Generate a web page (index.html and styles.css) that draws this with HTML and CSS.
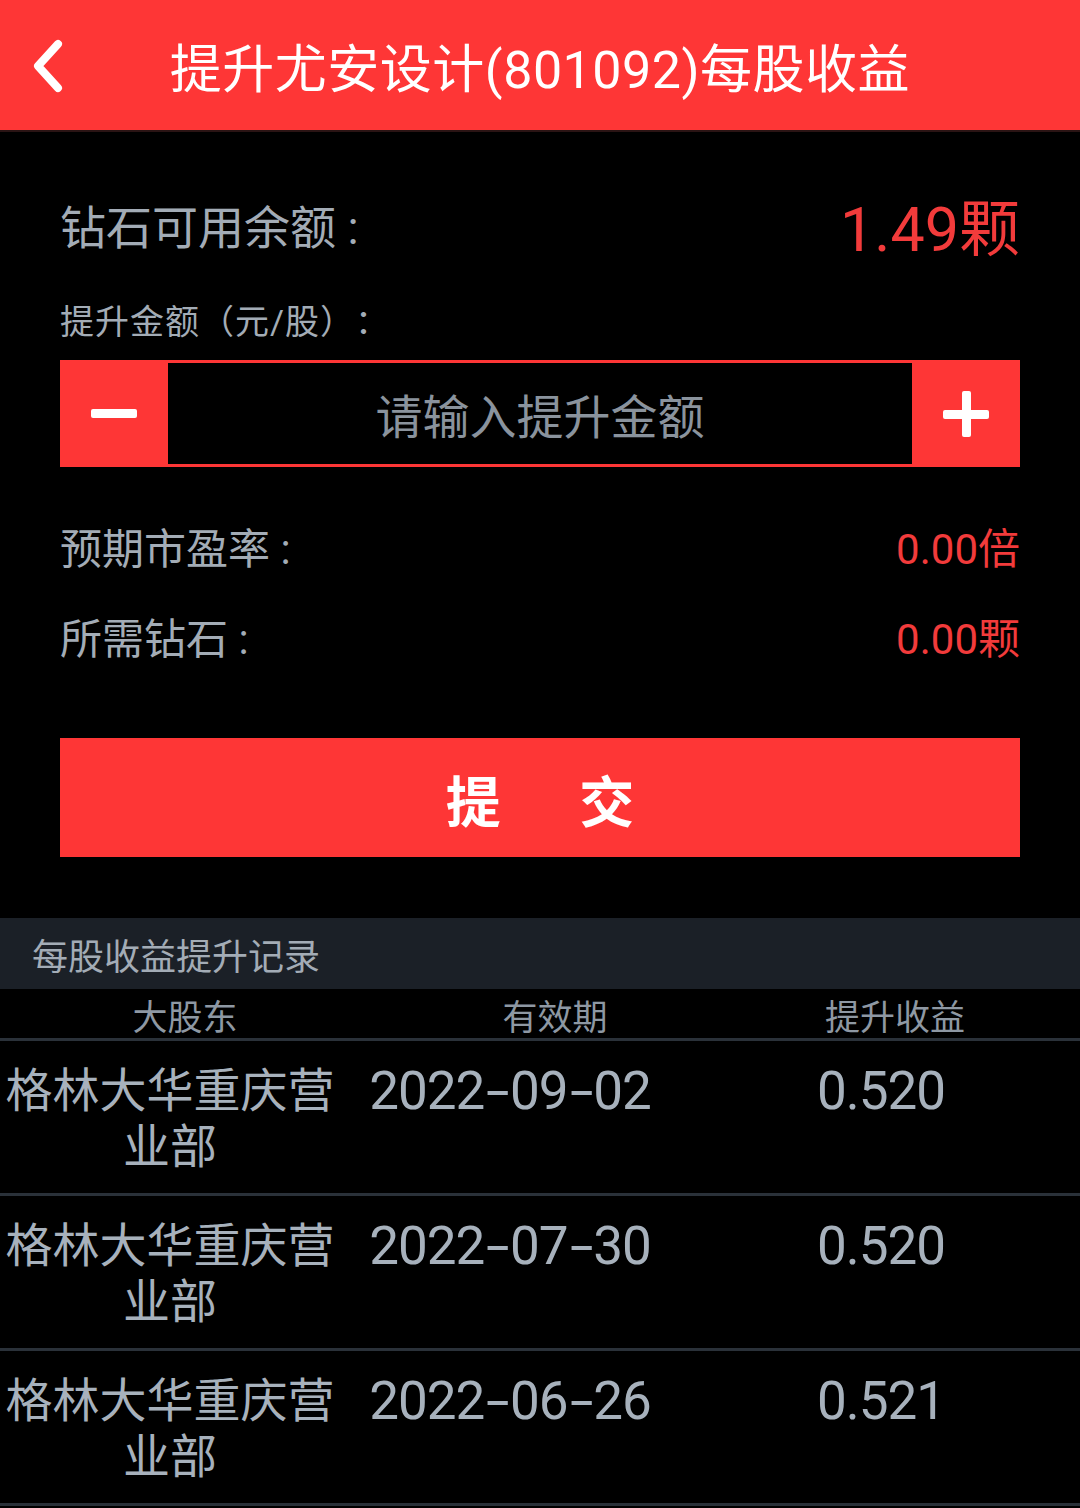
FILE: index.html
```html
<!DOCTYPE html>
<html lang="zh-CN">
<head>
    <meta charset="UTF-8">
    <meta name="viewport" content="width=device-width, initial-scale=1.0">
    <link rel="stylesheet" href="styles.css">
</head>
<body>
    <div class="topbar">
        <svg class="back" width="40" height="60" viewBox="0 0 40 60">
            <polyline points="28,8 8,30 28,52" fill="none" stroke="#fff" stroke-width="8" stroke-linecap="round" stroke-linejoin="round"/>
        </svg>
        <div class="title">提升尤安设计(801092)每股收益</div>
    </div>

    <div class="main">
        <div class="balance">
            <span class="balance-label">钻石可用余额 :</span>
            <span class="balance-value">1.49颗</span>
        </div>

        <div class="amount-label">提升金额（元/股）：</div>
        <div class="stepper">
            <div class="step-btn">
                <span class="minus"></span>
            </div>
            <div class="step-input">请输入提升金额</div>
            <div class="step-btn">
                <span class="plus"></span>
            </div>
        </div>

        <div class="info-row">
            <span class="info-label">预期市盈率 :</span>
            <span class="info-value">0.00倍</span>
        </div>
        <div class="info-row">
            <span class="info-label">所需钻石 :</span>
            <span class="info-value">0.00颗</span>
        </div>

        <div class="submit">提&nbsp;&nbsp;交</div>
    </div>

    <div class="section-title">每股收益提升记录</div>
    <div class="table-head">
        <span>大股东</span>
        <span>有效期</span>
        <span>提升收益</span>
    </div>
    <div class="record">
        <span class="holder">格林大华重庆营业部</span>
        <span class="date">2022<span class="dash">-</span>09<span class="dash">-</span>02</span>
        <span class="gain">0.520</span>
    </div>
    <div class="record">
        <span class="holder">格林大华重庆营业部</span>
        <span class="date">2022<span class="dash">-</span>07<span class="dash">-</span>30</span>
        <span class="gain">0.520</span>
    </div>
    <div class="record">
        <span class="holder">格林大华重庆营业部</span>
        <span class="date">2022<span class="dash">-</span>06<span class="dash">-</span>26</span>
        <span class="gain">0.521</span>
    </div>
</body>
</html>
```

FILE: styles.css
```css
body {
    margin: 0;
    background: #000;
    font-family: Roboto, "Noto Sans CJK SC", sans-serif;
    color: #a3acb6;
    text-spacing-trim: space-all;
}
.topbar {
    height: 130px;
    background: #fe3636;
    display: flex;
    align-items: center;
    justify-content: center;
    position: relative;
    border-bottom: 2px solid #2a1414;
}
.back {
    position: absolute;
    left: 30px;
    top: 36px;
}
.title {
    color: #fff;
    font-size: 52px;
    letter-spacing: 0.5px;
}
.main {
    padding: 0 60px;
}
.balance {
    height: 80px;
    margin-top: 52px;
    display: flex;
    align-items: center;
    justify-content: space-between;
}
.balance-label {
    font-size: 46px;
}
.balance-value {
    font-size: 61px;
    color: #f23b3b;
}
.amount-label {
    margin-top: 38px;
    font-size: 34px;
    line-height: 40px;
    letter-spacing: 1px;
}
.stepper {
    margin-top: 18px;
    height: 107px;
    display: flex;
    box-sizing: border-box;
    border-top: 3px solid #fe3636;
    border-bottom: 3px solid #fe3636;
}
.step-btn {
    width: 108px;
    background: #fe3636;
    display: flex;
    align-items: center;
    justify-content: center;
}
.minus {
    width: 46px;
    height: 9px;
    background: #fff;
    border-radius: 2px;
}
.plus {
    width: 46px;
    height: 46px;
    position: relative;
}
.plus::before,
.plus::after {
    content: "";
    position: absolute;
    background: #fff;
    border-radius: 2px;
}
.plus::before {
    left: 0;
    top: 19px;
    width: 46px;
    height: 9px;
}
.plus::after {
    left: 19px;
    top: 0;
    width: 9px;
    height: 46px;
}
.step-input {
    flex: 1;
    display: flex;
    align-items: center;
    justify-content: center;
    font-size: 47px;
    color: #8a939d;
}
.info-row {
    height: 90px;
    display: flex;
    align-items: center;
    justify-content: space-between;
}
.stepper + .info-row {
    margin-top: 33px;
}
.info-label {
    font-size: 42px;
}
.info-value {
    font-size: 42px;
    color: #f23b3b;
}
.submit {
    margin-top: 58px;
    height: 119px;
    background: #fe3636;
    color: #fff;
    font-size: 55px;
    font-weight: bold;
    display: flex;
    align-items: center;
    justify-content: center;
    letter-spacing: 17px;
    padding-left: 17px;
    box-sizing: border-box;
}
.section-title {
    margin-top: 61px;
    height: 71px;
    background: #1b2027;
    padding-left: 32px;
    display: flex;
    align-items: center;
    font-size: 36px;
}
.table-head {
    height: 49px;
    display: grid;
    grid-template-columns: 370px 370px 1fr;
    align-items: center;
    font-size: 35px;
    color: #8e98a3;
    border-bottom: 3px solid #2a3139;
}
.table-head span {
    text-align: center;
}
.table-head span:last-child {
    padding-right: 30px;
}
.record {
    height: 155px;
    display: grid;
    grid-template-columns: 340px 340px 1fr;
    align-items: start;
    padding-top: 22px;
    box-sizing: border-box;
    font-size: 47px;
    line-height: 56px;
    color: #a7b1bc;
    border-bottom: 3px solid #2a3139;
}
.record span {
    text-align: center;
}
.record .date,
.record .gain {
    font-size: 53px;
    letter-spacing: -1px;
}
.record .dash {
    display: inline-block;
    margin: 0 6px;
    transform: scaleX(1.6);
}
.record .gain {
    text-align: left;
    padding-left: 137px;
}
```
